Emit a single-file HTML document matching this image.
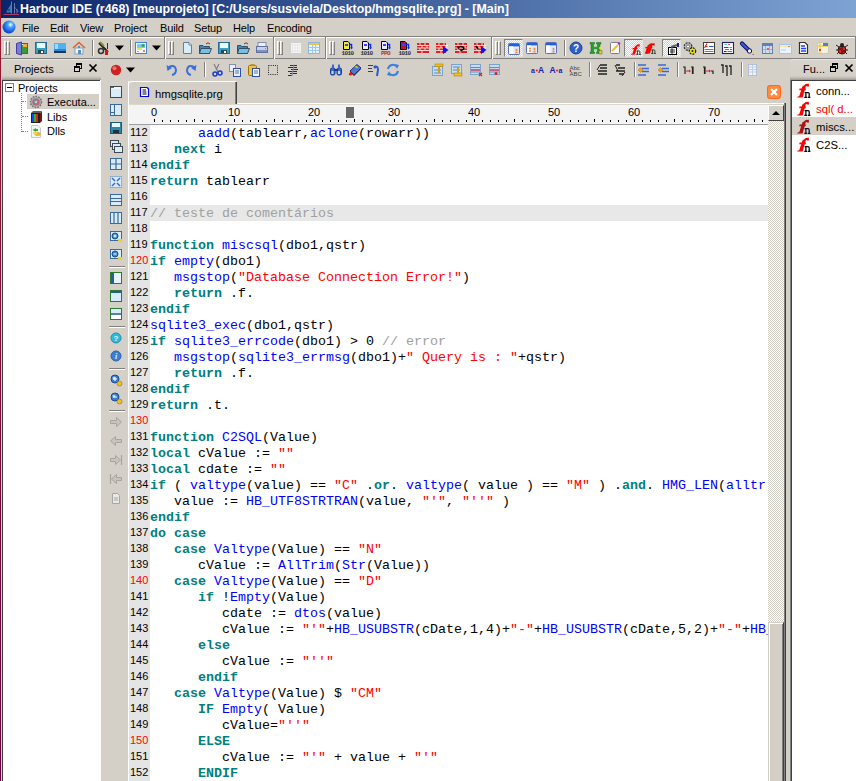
<!DOCTYPE html><html><head><meta charset="utf-8"><style>
html,body{margin:0;padding:0;}
body{width:856px;height:781px;position:relative;overflow:hidden;background:#D4D0C8;font-family:"Liberation Sans",sans-serif;font-size:11px;color:#000;}
div{position:absolute;box-sizing:border-box;}
.code{font-family:"Liberation Mono",monospace;font-size:13.333px;line-height:16px;white-space:pre;color:#000;}
.ln{font-family:"Liberation Sans",sans-serif;font-size:11px;line-height:16px;color:#000;}
.k{color:#008080;font-weight:bold;}
.f{color:#0000FF;}
.s{color:#FF0000;}
.c{color:#A0A0A0;}
.chk{background-color:#D4D0C8;background-image:linear-gradient(45deg,#fff 25%,transparent 25%,transparent 75%,#fff 75%),linear-gradient(45deg,#fff 25%,transparent 25%,transparent 75%,#fff 75%);background-size:2px 2px;background-position:0 0,1px 1px;}
</style></head><body>

<div style="left:0px;top:0px;width:856px;height:18px;background:linear-gradient(to right,#0A246A 0%,#7DA3D3 100%);"></div>
<svg style="position:absolute;left:2px;top:0px" width="18" height="16" viewBox="0 0 18 16"><path d="M1.5 14.5 L17 14.5" stroke="#c04060" stroke-width="0.9"/><path d="M9.5 1.5 L9.5 13.5M12.5 3 L12.5 13.5M15 9 L15 13.5" stroke="#8090b8" stroke-width="0.8"/><path d="M9 4 L4 12.5 L9 12.5Z" fill="#3a78b8"/><path d="M6 10 h2" stroke="#102040" stroke-width="1.2"/><path d="M12.5 7 L16.5 12" stroke="#8090b8" stroke-width="0.6"/></svg>
<div style="left:20px;top:1px;white-space:pre;color:#fff;font-weight:bold;font-size:12.4px;line-height:16px;">Harbour IDE (r468) [meuprojeto] [C:/Users/susviela/Desktop/hmgsqlite.prg] - [Main]</div>
<svg style="position:absolute;left:1px;top:19px" width="16" height="16" viewBox="0 0 16 16"><defs><radialGradient id="gg" cx="0.62" cy="0.32" r="0.75"><stop offset="0" stop-color="#ffffff"/><stop offset="0.3" stop-color="#40a0ff"/><stop offset="1" stop-color="#0030c0"/></radialGradient></defs><circle cx="8" cy="8" r="6.5" fill="url(#gg)"/></svg>
<div style="left:22px;top:21px;white-space:pre;font-size:11px;line-height:14px;letter-spacing:-0.15px;">File</div>
<div style="left:50px;top:21px;white-space:pre;font-size:11px;line-height:14px;letter-spacing:-0.15px;">Edit</div>
<div style="left:80px;top:21px;white-space:pre;font-size:11px;line-height:14px;letter-spacing:-0.15px;">View</div>
<div style="left:114px;top:21px;white-space:pre;font-size:11px;line-height:14px;letter-spacing:-0.15px;">Project</div>
<div style="left:160px;top:21px;white-space:pre;font-size:11px;line-height:14px;letter-spacing:-0.15px;">Build</div>
<div style="left:194px;top:21px;white-space:pre;font-size:11px;line-height:14px;letter-spacing:-0.15px;">Setup</div>
<div style="left:233px;top:21px;white-space:pre;font-size:11px;line-height:14px;letter-spacing:-0.15px;">Help</div>
<div style="left:267px;top:21px;white-space:pre;font-size:11px;line-height:14px;letter-spacing:-0.15px;">Encoding</div>
<div style="left:0px;top:36px;width:856px;height:1px;background:#808080;"></div>
<div style="left:0px;top:37px;width:856px;height:1px;background:#fff;"></div>
<div style="left:0px;top:58px;width:856px;height:1px;background:#808080;"></div>
<div style="left:1px;top:37px;width:164px;height:22px;border-top:1px solid #fff;"></div>
<div style="left:164px;top:37px;width:1px;height:22px;background:#808080;"></div>
<div style="left:165px;top:37px;width:109px;height:22px;border-left:1px solid #fff;border-top:1px solid #fff;"></div>
<div style="left:273px;top:37px;width:1px;height:22px;background:#808080;"></div>
<div style="left:274px;top:37px;width:52px;height:22px;border-left:1px solid #fff;border-top:1px solid #fff;"></div>
<div style="left:325px;top:37px;width:1px;height:22px;background:#808080;"></div>
<div style="left:326px;top:37px;width:166px;height:22px;border-left:1px solid #fff;border-top:1px solid #fff;"></div>
<div style="left:491px;top:37px;width:1px;height:22px;background:#808080;"></div>
<div style="left:492px;top:37px;width:364px;height:22px;border-left:1px solid #fff;border-top:1px solid #fff;"></div>
<div style="left:855px;top:37px;width:1px;height:22px;background:#808080;"></div>
<div style="left:4px;top:41px;width:3px;height:14px;border-left:1px solid #fff;border-top:1px solid #fff;border-right:1px solid #808080;border-bottom:1px solid #808080;"></div>
<div style="left:7px;top:41px;width:3px;height:14px;border-left:1px solid #fff;border-top:1px solid #fff;border-right:1px solid #808080;border-bottom:1px solid #808080;"></div>
<div style="left:168px;top:41px;width:3px;height:14px;border-left:1px solid #fff;border-top:1px solid #fff;border-right:1px solid #808080;border-bottom:1px solid #808080;"></div>
<div style="left:171px;top:41px;width:3px;height:14px;border-left:1px solid #fff;border-top:1px solid #fff;border-right:1px solid #808080;border-bottom:1px solid #808080;"></div>
<div style="left:277px;top:41px;width:3px;height:14px;border-left:1px solid #fff;border-top:1px solid #fff;border-right:1px solid #808080;border-bottom:1px solid #808080;"></div>
<div style="left:280px;top:41px;width:3px;height:14px;border-left:1px solid #fff;border-top:1px solid #fff;border-right:1px solid #808080;border-bottom:1px solid #808080;"></div>
<div style="left:329px;top:41px;width:3px;height:14px;border-left:1px solid #fff;border-top:1px solid #fff;border-right:1px solid #808080;border-bottom:1px solid #808080;"></div>
<div style="left:332px;top:41px;width:3px;height:14px;border-left:1px solid #fff;border-top:1px solid #fff;border-right:1px solid #808080;border-bottom:1px solid #808080;"></div>
<div style="left:495px;top:41px;width:3px;height:14px;border-left:1px solid #fff;border-top:1px solid #fff;border-right:1px solid #808080;border-bottom:1px solid #808080;"></div>
<div style="left:498px;top:41px;width:3px;height:14px;border-left:1px solid #fff;border-top:1px solid #fff;border-right:1px solid #808080;border-bottom:1px solid #808080;"></div>
<div style="left:92px;top:40px;width:1px;height:16px;background:#808080;"></div>
<div style="left:93px;top:40px;width:1px;height:16px;background:#fff;"></div>
<div style="left:130px;top:40px;width:1px;height:16px;background:#808080;"></div>
<div style="left:131px;top:40px;width:1px;height:16px;background:#fff;"></div>
<div style="left:564px;top:40px;width:1px;height:16px;background:#808080;"></div>
<div style="left:565px;top:40px;width:1px;height:16px;background:#fff;"></div>
<div style="left:504px;top:39px;width:19px;height:18px;border-left:1px solid #808080;border-top:1px solid #808080;border-right:1px solid #E4E2DC;border-bottom:1px solid #E4E2DC;"></div>
<div class="chk" style="left:505px;top:40px;width:17px;height:16px;"></div>
<div style="left:624px;top:39px;width:19px;height:18px;border-left:1px solid #808080;border-top:1px solid #808080;border-right:1px solid #E4E2DC;border-bottom:1px solid #E4E2DC;"></div>
<div class="chk" style="left:625px;top:40px;width:17px;height:16px;"></div>
<div style="left:662px;top:39px;width:19px;height:18px;border-left:1px solid #808080;border-top:1px solid #808080;border-right:1px solid #E4E2DC;border-bottom:1px solid #E4E2DC;"></div>
<div class="chk" style="left:663px;top:40px;width:17px;height:16px;"></div>
<svg style="position:absolute;left:14px;top:40px" width="16" height="16" viewBox="0 0 16 16"><rect x="4.5" y="3.5" width="9" height="10" fill="#e8f0ff" stroke="#5050b0"/>
<rect x="7" y="5" width="6" height="8" fill="#3a9a3a"/><rect x="9" y="4" width="4" height="3" fill="#f0b040"/>
<path d="M2.5 3.5 L7.5 2 L7.5 15 L2.5 13.5 Z" fill="#7a7ad8" stroke="#4040a0"/></svg>
<svg style="position:absolute;left:33px;top:40px" width="16" height="16" viewBox="0 0 16 16"><rect x="2.5" y="2.5" width="11" height="11" fill="#3aa0c0" stroke="#2a6a98"/><rect x="4" y="3" width="8" height="5" fill="#e8fcff"/><rect x="5" y="10" width="6" height="3.5" fill="#284858"/><rect x="8" y="11" width="2" height="2" fill="#fff"/></svg>
<svg style="position:absolute;left:52px;top:40px" width="16" height="16" viewBox="0 0 16 16"><rect x="2" y="3" width="12" height="10" fill="#2a8ad8"/><rect x="2" y="3" width="12" height="6" fill="#50b0f0"/>
<rect x="2" y="11" width="12" height="2" fill="#203850"/><rect x="3" y="4" width="3" height="5" fill="#a0d8ff"/></svg>
<svg style="position:absolute;left:71px;top:40px" width="16" height="16" viewBox="0 0 16 16"><path d="M2 8 L8 2.5 L14 8" fill="none" stroke="#e06030" stroke-width="1.6"/>
<rect x="4" y="8" width="8" height="6" fill="#f4f4f4" stroke="#80a0c0"/><rect x="7" y="10" width="3" height="4" fill="#5090d0"/><rect x="7" y="6" width="2" height="2" fill="#5090d0"/></svg>
<svg style="position:absolute;left:96px;top:40px" width="16" height="16" viewBox="0 0 16 16"><path d="M3 3 L12 12" stroke="#202020" stroke-width="2"/><path d="M4 2 L8 6" stroke="#909020" stroke-width="2"/>
<circle cx="5" cy="11" r="2.5" fill="none" stroke="#303030" stroke-width="1.5"/><rect x="9" y="10" width="3" height="5" fill="#e01010"/><rect x="11" y="3" width="1" height="6" fill="#303030"/></svg>
<svg style="position:absolute;left:112px;top:40px" width="16" height="16" viewBox="0 0 16 16"><path d="M3 5.5 L12 5.5 L7.5 10.5 Z" fill="#000"/></svg>
<svg style="position:absolute;left:133px;top:40px" width="16" height="16" viewBox="0 0 16 16"><rect x="2.5" y="2.5" width="11" height="11" fill="#f0f8ff" stroke="#3a8ac8"/>
<rect x="4" y="4" width="8" height="4" fill="#80c8f0"/><rect x="4" y="8" width="5" height="2" fill="#f0e060"/><circle cx="10" cy="5.5" r="1.5" fill="#4a9a3a"/><rect x="10" y="10" width="2" height="2" fill="#f08060"/><rect x="4" y="11" width="2" height="1" fill="#a0c040"/></svg>
<svg style="position:absolute;left:149px;top:40px" width="16" height="16" viewBox="0 0 16 16"><path d="M3 5.5 L12 5.5 L7.5 10.5 Z" fill="#000"/></svg>
<svg style="position:absolute;left:179px;top:40px" width="16" height="16" viewBox="0 0 16 16"><path d="M4.5 2.5 L10 2.5 L12.5 5 L12.5 13.5 L4.5 13.5 Z" fill="#d8ecfa" stroke="#6080a0"/><path d="M10 2.5 L10 5 L12.5 5" fill="#fff" stroke="#6080a0"/></svg>
<svg style="position:absolute;left:197px;top:40px" width="16" height="16" viewBox="0 0 16 16"><path d="M2.5 5.5 L6 5.5 L7 6.5 L12.5 6.5 L12.5 13.5 L2.5 13.5 Z" fill="#3a88b8" stroke="#305070"/>
<path d="M4 8.5 L14.5 8.5 L12.5 13.5 L2.5 13.5 Z" fill="#78c0e0" stroke="#305070"/><path d="M9 4 Q11 1.5 13 4" fill="none" stroke="#803010"/></svg>
<svg style="position:absolute;left:216px;top:40px" width="16" height="16" viewBox="0 0 16 16"><rect x="2.5" y="2.5" width="11" height="11" fill="#3aa0c0" stroke="#2a6a98"/><rect x="4" y="3" width="8" height="5" fill="#e8fcff"/><rect x="5" y="10" width="6" height="3.5" fill="#284858"/><rect x="8" y="11" width="2" height="2" fill="#fff"/></svg>
<svg style="position:absolute;left:235px;top:40px" width="16" height="16" viewBox="0 0 16 16"><path d="M2.5 5.5 L6 5.5 L7 6.5 L12.5 6.5 L12.5 13.5 L2.5 13.5 Z" fill="#3a88b8" stroke="#305070"/>
<path d="M4 8.5 L14.5 8.5 L12.5 13.5 L2.5 13.5 Z" fill="#78c0e0" stroke="#305070"/><path d="M9 4 Q11 1.5 13 4" fill="none" stroke="#803010"/></svg>
<svg style="position:absolute;left:254px;top:40px" width="16" height="16" viewBox="0 0 16 16"><rect x="4" y="2.5" width="8" height="4" fill="#f0f0f0" stroke="#8090b0"/><rect x="2.5" y="6.5" width="11" height="6" fill="#c8d0e8" stroke="#6070a0"/>
<rect x="3" y="10" width="10" height="2" fill="#8090c0"/><rect x="11" y="8" width="1" height="1" fill="#40c040"/></svg>
<svg style="position:absolute;left:288px;top:40px" width="16" height="16" viewBox="0 0 16 16"><rect x="2.5" y="2.5" width="11" height="11" fill="#f4f4f4" stroke="#d0d0d0"/><path d="M4 5h8M4 8h8M4 11h8" stroke="#c8c8c8" stroke-dasharray="1 1.5"/></svg>
<svg style="position:absolute;left:306px;top:40px" width="16" height="16" viewBox="0 0 16 16"><rect x="2.5" y="2.5" width="11" height="11" fill="#e8f4ff" stroke="#8ab8e0"/><rect x="3" y="3" width="10" height="2" fill="#f0c050"/><path d="M3 7.5h10M3 10.5h10M6.5 5v8M9.5 5v8" stroke="#9ac8f0"/></svg>
<svg style="position:absolute;left:339px;top:40px" width="16" height="16" viewBox="0 0 16 16"><path d="M4.5 1.5 L9 1.5 L10.5 3 L10.5 9.5 L4.5 9.5 Z" fill="#f0e840" stroke="#000"/><rect x="6" y="4" width="3" height="2" fill="#4040ff"/>
<path d="M10.5 4.5 L12.5 4.5 L12.5 8" fill="none" stroke="#0030ff" stroke-width="1.5"/><path d="M11 7.5 L14 7.5 L12.5 9.5Z" fill="#0030ff"/>
<text x="8.5" y="15" font-family="Liberation Mono" font-size="6" font-weight="bold" text-anchor="middle" fill="#303030" letter-spacing="-0.6">1010</text></svg>
<svg style="position:absolute;left:358px;top:40px" width="16" height="16" viewBox="0 0 16 16"><path d="M4.5 1.5 L9 1.5 L10.5 3 L10.5 9.5 L4.5 9.5 Z" fill="#e8e8ff" stroke="#000"/><rect x="6" y="4" width="3" height="2" fill="#4040ff"/>
<path d="M10.5 4.5 L12.5 4.5 L12.5 8" fill="none" stroke="#0030ff" stroke-width="1.5"/><path d="M11 7.5 L14 7.5 L12.5 9.5Z" fill="#0030ff"/>
<text x="8.5" y="15" font-family="Liberation Mono" font-size="6" font-weight="bold" text-anchor="middle" fill="#303030" letter-spacing="-0.6">1010</text></svg>
<svg style="position:absolute;left:377px;top:40px" width="16" height="16" viewBox="0 0 16 16"><path d="M4.5 1.5 L9 1.5 L10.5 3 L10.5 9.5 L4.5 9.5 Z" fill="#e8e8ff" stroke="#000"/><rect x="6" y="4" width="3" height="2" fill="#4040ff"/>
<path d="M10.5 4.5 L12.5 4.5 L12.5 8" fill="none" stroke="#0030ff" stroke-width="1.5"/><path d="M11 7.5 L14 7.5 L12.5 9.5Z" fill="#0030ff"/>
<text x="8.5" y="15" font-family="Liberation Mono" font-size="6" font-weight="bold" text-anchor="middle" fill="#b03030" letter-spacing="-0.6">PPO</text></svg>
<svg style="position:absolute;left:396px;top:40px" width="16" height="16" viewBox="0 0 16 16"><path d="M4.5 1.5 L9 1.5 L10.5 3 L10.5 9.5 L4.5 9.5 Z" fill="#c01040" stroke="#000"/><rect x="6" y="4" width="3" height="2" fill="#4040ff"/>
<path d="M10.5 4.5 L12.5 4.5 L12.5 8" fill="none" stroke="#0030ff" stroke-width="1.5"/><path d="M11 7.5 L14 7.5 L12.5 9.5Z" fill="#0030ff"/>
<text x="8.5" y="15" font-family="Liberation Mono" font-size="6" font-weight="bold" text-anchor="middle" fill="#303030" letter-spacing="-0.6">1010</text></svg>
<svg style="position:absolute;left:415px;top:40px" width="16" height="16" viewBox="0 0 16 16"><rect x="2" y="3" width="12" height="10" fill="#e02020"/><path d="M2 5.5h12M2 8h12M2 10.5h12" stroke="#fff" stroke-width="0.8"/><path d="M5 3v2.5M10 3v2.5M7 5.5v2.5M12 5.5v2.5M5 8v2.5M10 8v2.5M7 10.5v2.5" stroke="#fff" stroke-width="0.8"/></svg>
<svg style="position:absolute;left:434px;top:40px" width="16" height="16" viewBox="0 0 16 16"><rect x="2" y="3" width="10" height="10" fill="#e02020"/><path d="M2 5.5h12M2 8h12M2 10.5h12" stroke="#fff" stroke-width="0.8"/><path d="M5 3v2.5M10 3v2.5M7 5.5v2.5M12 5.5v2.5M5 8v2.5M10 8v2.5M7 10.5v2.5" stroke="#fff" stroke-width="0.8"/><path d="M9 6 L14.5 10 L9 14 Z" fill="#1010ff"/></svg>
<svg style="position:absolute;left:453px;top:40px" width="16" height="16" viewBox="0 0 16 16"><rect x="2" y="3" width="12" height="10" fill="#e02020"/><path d="M2 5.5h12M2 8h12M2 10.5h12" stroke="#fff" stroke-width="0.8"/><path d="M5 3v2.5M10 3v2.5M7 5.5v2.5M12 5.5v2.5M5 8v2.5M10 8v2.5M7 10.5v2.5" stroke="#fff" stroke-width="0.8"/><path d="M5 8 Q8 5 11 8 Q10 11 7 10" fill="none" stroke="#000" stroke-width="1.3"/><path d="M4 6 L5 9 L7 8Z" fill="#000"/></svg>
<svg style="position:absolute;left:472px;top:40px" width="16" height="16" viewBox="0 0 16 16"><rect x="2" y="3" width="10" height="10" fill="#e02020"/><path d="M2 5.5h12M2 8h12M2 10.5h12" stroke="#fff" stroke-width="0.8"/><path d="M5 3v2.5M10 3v2.5M7 5.5v2.5M12 5.5v2.5M5 8v2.5M10 8v2.5M7 10.5v2.5" stroke="#fff" stroke-width="0.8"/><path d="M4 6 L6 9" stroke="#000" stroke-width="1.5"/><path d="M9 6 L14.5 10 L9 14 Z" fill="#1010ff"/></svg>
<svg style="position:absolute;left:506px;top:41px" width="16" height="16" viewBox="0 0 16 16"><rect x="2.5" y="2.5" width="11" height="11" rx="0.8" fill="#ecedfc" stroke="#5a70c0"/><rect x="3" y="3" width="10" height="2.4" fill="#1a60e8"/><rect x="3" y="5.4" width="4" height="7.6" fill="#fafcff"/>
<rect x="8.5" y="7" width="4" height="6" fill="#d8e0f4"/><circle cx="10.5" cy="9" r="1.1" fill="#f09030"/><circle cx="10.5" cy="11.5" r="1.1" fill="#f09030"/></svg>
<svg style="position:absolute;left:524px;top:40px" width="16" height="16" viewBox="0 0 16 16"><rect x="2.5" y="2.5" width="11" height="11" rx="0.8" fill="#ecedfc" stroke="#5a70c0"/><rect x="3" y="3" width="10" height="2.4" fill="#1a60e8"/><rect x="3" y="5.4" width="4" height="7.6" fill="#fafcff"/>
<rect x="8.5" y="7" width="4" height="6" fill="#d8e0f4"/><circle cx="10.5" cy="9" r="1.1" fill="#f09030"/><circle cx="10.5" cy="11.5" r="1.1" fill="#f09030"/><circle cx="6" cy="8.5" r="1.1" fill="#f09030"/><circle cx="6" cy="11" r="1.1" fill="#f09030"/></svg>
<svg style="position:absolute;left:543px;top:40px" width="16" height="16" viewBox="0 0 16 16"><rect x="2.5" y="2.5" width="11" height="11" rx="0.8" fill="#ecedfc" stroke="#5a70c0"/><rect x="3" y="3" width="10" height="2.4" fill="#1a60e8"/><rect x="3" y="5.4" width="4" height="7.6" fill="#fafcff"/>
<rect x="8.5" y="7" width="4" height="6" fill="#d8e0f4"/><circle cx="10.5" cy="9" r="1.1" fill="#f09030"/><circle cx="10.5" cy="11.5" r="1.1" fill="#f09030"/></svg>
<svg style="position:absolute;left:568px;top:40px" width="16" height="16" viewBox="0 0 16 16"><circle cx="8" cy="8" r="6" fill="#2a60c8" stroke="#1a40a0"/><text x="8" y="12" font-family="Liberation Sans" font-weight="bold" font-size="10" text-anchor="middle" fill="#fff">?</text></svg>
<svg style="position:absolute;left:588px;top:40px" width="16" height="16" viewBox="0 0 16 16"><path d="M2 2.5h4.5v1.5h-1v3.2h4v-3.2h-1v-1.5h4.5v1.5h-1v8h1v1.5h-4.5v-1.5h1v-3.2h-4v3.2h1v1.5h-4.5v-1.5h1v-8h-1Z" fill="#20a030" stroke="#107020" stroke-width="0.5"/><circle cx="12.5" cy="8" r="1.5" fill="#f0e020"/><path d="M11 10.5h3v3.5h-3Z" fill="#e8d010" stroke="#606010" stroke-width="0.5"/></svg>
<svg style="position:absolute;left:607px;top:40px" width="16" height="16" viewBox="0 0 16 16"><rect x="3.5" y="2.5" width="9" height="11" rx="1" fill="#f8f8f8" stroke="#808080"/><path d="M5 11 L11 5" stroke="#f0c020" stroke-width="2"/><circle cx="12" cy="3.5" r="1.3" fill="#c020c0"/></svg>
<svg style="position:absolute;left:630px;top:43px" width="12" height="12" viewBox="0 0 16 16"><path d="M8.2 3.2 Q9.5 1.6 12.8 1.8 L13 4.6 L11 4.6 Q10.6 3.6 9.8 4.2 L6.6 15.4 L1.2 15.6 L1.6 14.4 L3.2 14.2 L6.4 4.6 Z" fill="#ff0000"/><path d="M3.6 6.6 L10 6.6 L9.6 8.2 L3.2 8.2 Z" fill="#ff0000"/><path d="M8.6 10.6 h3.4 q1.2 0 1.2 1.2 v3.6 M9.9 10.6 v4.8 M8.3 15.4 h3 M12 15.4 h2.4" stroke="#303030" stroke-width="1.25" fill="none"/></svg>
<svg style="position:absolute;left:645px;top:42px" width="12" height="12" viewBox="0 0 16 16"><g transform="translate(-3,0)"><path d="M8.2 3.2 Q9.5 1.6 12.8 1.8 L13 4.6 L11 4.6 Q10.6 3.6 9.8 4.2 L6.6 15.4 L1.2 15.6 L1.6 14.4 L3.2 14.2 L6.4 4.6 Z" fill="#ff0000"/><path d="M3.6 6.6 L10 6.6 L9.6 8.2 L3.2 8.2 Z" fill="#ff0000"/></g><path d="M8.2 3.2 Q9.5 1.6 12.8 1.8 L13 4.6 L11 4.6 Q10.6 3.6 9.8 4.2 L6.6 15.4 L1.2 15.6 L1.6 14.4 L3.2 14.2 L6.4 4.6 Z" fill="#ff0000"/><path d="M3.6 6.6 L10 6.6 L9.6 8.2 L3.2 8.2 Z" fill="#ff0000"/><path d="M8.6 10.6 h3.4 q1.2 0 1.2 1.2 v3.6 M9.9 10.6 v4.8 M8.3 15.4 h3 M12 15.4 h2.4" stroke="#303030" stroke-width="1.25" fill="none"/></svg>
<svg style="position:absolute;left:665px;top:41px" width="16" height="16" viewBox="0 0 16 16"><rect x="3.5" y="6.5" width="8" height="7" fill="#f8f8f8" stroke="#000"/><path d="M5 9h5M5 11h5M7 7v6" stroke="#000" stroke-width="0.8"/><path d="M6 6 L12 4" stroke="#606060" stroke-width="2"/><rect x="12" y="2" width="2" height="4" fill="#2020a0"/></svg>
<svg style="position:absolute;left:682px;top:40px" width="16" height="16" viewBox="0 0 16 16"><circle cx="6" cy="6.5" r="3.8" fill="#b8b8b8" stroke="#303030" stroke-width="1.2" stroke-dasharray="2 1"/><circle cx="6" cy="6.5" r="1.5" fill="#fff" stroke="#404040" stroke-width="0.6"/><circle cx="10.5" cy="11" r="3.2" fill="#e8e020" stroke="#202010" stroke-width="1.2" stroke-dasharray="2 1"/><circle cx="10.5" cy="11" r="1" fill="#202010"/></svg>
<svg style="position:absolute;left:701px;top:40px" width="16" height="16" viewBox="0 0 16 16"><rect x="2.5" y="2.5" width="11" height="11" fill="#fff" stroke="#404040"/><path d="M3.5 8 L6 3.5 M4.5 6.5h2" stroke="#e02020" stroke-width="1.1" fill="none"/><path d="M8 6.5h4.5" stroke="#3050c0" stroke-width="1"/><path d="M3.5 9.5h9M3.5 11.5h9" stroke="#6a78c8" stroke-width="1"/></svg>
<svg style="position:absolute;left:720px;top:40px" width="16" height="16" viewBox="0 0 16 16"><rect x="2.5" y="2.5" width="11" height="11" fill="#fff" stroke="#20206a" stroke-width="1.1"/><path d="M4.5 4.5h2.5" stroke="#30d0d0" stroke-width="1"/><path d="M8 4.5h2" stroke="#f04080" stroke-width="1"/><path d="M4 7.5h4.5" stroke="#2040e0" stroke-width="1"/><path d="M9.5 7.5h2.5" stroke="#30c030" stroke-width="1"/><path d="M5 9.5h4" stroke="#20b020" stroke-width="1"/><path d="M10 9.5h2" stroke="#806040" stroke-width="1"/><path d="M4 11.5h2.5" stroke="#20206a" stroke-width="1"/><path d="M7.5 11.5h4.5" stroke="#e04040" stroke-width="1"/></svg>
<svg style="position:absolute;left:739px;top:40px" width="16" height="16" viewBox="0 0 16 16"><path d="M3 3.5 L10 10.5" stroke="#101060" stroke-width="4.2" stroke-linecap="round"/><path d="M3 3.5 L9.5 10" stroke="#3a5ae0" stroke-width="2.2" stroke-linecap="round"/><circle cx="10.5" cy="11" r="2.2" fill="#f0f0f0" stroke="#101060"/><path d="M12 14 L14 12.5" stroke="#e0e040" stroke-width="1"/><path d="M13.5 14.5h1.5" stroke="#a050d0" stroke-width="1.2"/></svg>
<svg style="position:absolute;left:759px;top:40px" width="16" height="16" viewBox="0 0 16 16"><rect x="3.5" y="3.5" width="10" height="10" fill="#d0dcf0" stroke="#6080b0"/><rect x="4" y="4" width="9" height="2" fill="#6080c0"/><path d="M6.5 6v7M10.5 6v7M4 9.5h9" stroke="#a0b0d0"/><rect x="8" y="8" width="2" height="2" fill="#e06060"/></svg>
<svg style="position:absolute;left:777px;top:40px" width="16" height="16" viewBox="0 0 16 16"><rect x="2.5" y="4.5" width="12" height="9" fill="#e8f4ff" stroke="#a0c8e8"/><rect x="3" y="5" width="11" height="2" fill="#f8e8c0"/><path d="M4 10h5" stroke="#b0d0f0"/><rect x="11" y="6" width="2" height="1" fill="#e08060"/></svg>
<svg style="position:absolute;left:795px;top:40px" width="16" height="16" viewBox="0 0 16 16"><path d="M4.5 2.5 L10 2.5 L12.5 5 L12.5 13.5 L4.5 13.5 Z" fill="#fff" stroke="#303030" stroke-width="1.2"/><path d="M6 6h4M6 8.5h5M6 11h5" stroke="#2040ff" stroke-width="1.3"/></svg>
<svg style="position:absolute;left:815px;top:40px" width="16" height="16" viewBox="0 0 16 16"><rect x="2.5" y="2.5" width="11" height="11" rx="1.5" fill="#f4f0e0" stroke="#d0c8b0"/><path d="M5 3v10" stroke="#f0d040" stroke-width="1.5"/><path d="M3 6h10" stroke="#f0d040" stroke-width="1.5"/><rect x="8" y="3" width="5" height="3" fill="#5080c0"/><rect x="4" y="9" width="2" height="2" fill="#e04040"/></svg>
<svg style="position:absolute;left:834px;top:40px" width="16" height="16" viewBox="0 0 16 16"><path d="M2 5 L5 7M14 5 L11 7M2 10h3M14 10h-3M3 14 L5 12M13 14 L11 12" stroke="#202020" stroke-width="1"/><ellipse cx="8" cy="10" rx="4" ry="4" fill="#e02020" stroke="#301010"/><circle cx="8" cy="5" r="2" fill="#202020"/><path d="M8 6v8" stroke="#301010"/><circle cx="6" cy="9" r="0.8" fill="#000"/><circle cx="10" cy="11" r="0.8" fill="#000"/></svg>
<div style="left:0px;top:0px;width:1px;height:781px;background:linear-gradient(#9B1B30,#6A0045);"></div>
<div style="left:204px;top:62px;width:1px;height:15px;background:#808080;"></div>
<div style="left:205px;top:62px;width:1px;height:15px;background:#fff;"></div>
<div style="left:589px;top:62px;width:1px;height:15px;background:#808080;"></div>
<div style="left:590px;top:62px;width:1px;height:15px;background:#fff;"></div>
<div style="left:634px;top:62px;width:1px;height:15px;background:#808080;"></div>
<div style="left:635px;top:62px;width:1px;height:15px;background:#fff;"></div>
<div style="left:677px;top:62px;width:1px;height:15px;background:#808080;"></div>
<div style="left:678px;top:62px;width:1px;height:15px;background:#fff;"></div>
<div style="left:741px;top:62px;width:1px;height:15px;background:#808080;"></div>
<div style="left:742px;top:62px;width:1px;height:15px;background:#fff;"></div>
<svg style="position:absolute;left:108px;top:62px" width="16" height="16" viewBox="0 0 16 16"><circle cx="8" cy="8" r="5.2" fill="#d02020"/><circle cx="6.5" cy="6.3" r="2" fill="#f07070"/></svg>
<svg style="position:absolute;left:123px;top:62px" width="16" height="16" viewBox="0 0 16 16"><path d="M3 5.5 L12 5.5 L7.5 10.5 Z" fill="#000"/></svg>
<svg style="position:absolute;left:164px;top:62px" width="16" height="16" viewBox="0 0 16 16"><path d="M5 5 Q11 2 12 8 Q12 12 8 13" fill="none" stroke="#3a70d8" stroke-width="2"/><path d="M2.5 3 L3.5 9 L8 6 Z" fill="#3a70d8"/></svg>
<svg style="position:absolute;left:183px;top:62px" width="16" height="16" viewBox="0 0 16 16"><path d="M11 5 Q5 2 4 8 Q4 12 8 13" fill="none" stroke="#3a70d8" stroke-width="2"/><path d="M13.5 3 L12.5 9 L8 6 Z" fill="#3a70d8"/></svg>
<svg style="position:absolute;left:209px;top:62px" width="16" height="16" viewBox="0 0 16 16"><path d="M5 2 L9 10M10 2 L7 8" stroke="#808080" stroke-width="1.2"/><circle cx="6" cy="12" r="2" fill="none" stroke="#1a3ad0" stroke-width="1.5"/><circle cx="11" cy="11" r="2" fill="none" stroke="#1a3ad0" stroke-width="1.5"/></svg>
<svg style="position:absolute;left:227px;top:62px" width="16" height="16" viewBox="0 0 16 16"><rect x="2.5" y="2.5" width="6" height="7" fill="#e8f0ff" stroke="#8090b0"/><rect x="6.5" y="6.5" width="7" height="8" fill="#e8f0ff" stroke="#3050a0"/><path d="M8 9h4M8 11h4" stroke="#3050a0" stroke-width="0.8"/></svg>
<svg style="position:absolute;left:246px;top:62px" width="16" height="16" viewBox="0 0 16 16"><rect x="2.5" y="3.5" width="8" height="10" rx="1" fill="#f0c040" stroke="#a07010"/><rect x="4.5" y="2" width="4" height="2" fill="#c09030"/><rect x="6.5" y="6.5" width="7" height="8" fill="#f0f4ff" stroke="#3050a0"/><path d="M8 9h4M8 11h4" stroke="#3050a0" stroke-width="0.8"/></svg>
<svg style="position:absolute;left:265px;top:62px" width="16" height="16" viewBox="0 0 16 16"><rect x="3.5" y="3.5" width="9" height="9" fill="none" stroke="#202020" stroke-dasharray="1 1.2"/></svg>
<svg style="position:absolute;left:285px;top:62px" width="16" height="16" viewBox="0 0 16 16"><path d="M5 3.5h7M3 5.5h9M6 7.5h7M3 9.5h9M5 11.5h7M3 13.5h4" stroke="#303030" stroke-width="1"/><path d="M9 2.5 L7 14" stroke="#8090c0" stroke-width="1"/></svg>
<svg style="position:absolute;left:328px;top:62px" width="16" height="16" viewBox="0 0 16 16"><rect x="2.5" y="6" width="4.5" height="7" rx="1.5" fill="#3a6ad0" stroke="#1a3a90"/><rect x="9" y="6" width="4.5" height="7" rx="1.5" fill="#3a6ad0" stroke="#1a3a90"/><rect x="4" y="2.5" width="2" height="4" fill="#3a6ad0"/><rect x="10" y="2.5" width="2" height="4" fill="#3a6ad0"/><rect x="6" y="7" width="4" height="2" fill="#1a3a90"/><rect x="3.5" y="9" width="2" height="3" fill="#c0d8ff"/><rect x="10" y="9" width="2" height="3" fill="#c0d8ff"/></svg>
<svg style="position:absolute;left:347px;top:62px" width="16" height="16" viewBox="0 0 16 16"><path d="M3 9 L10 2.5 L14 6 L7 13 Z" fill="#4a7ad0" stroke="#203070"/><path d="M7 5 L10 4 L11 6 Z" fill="#f0e020"/><path d="M3 10 L7 14 L14 7" fill="none" stroke="#e04040"/><circle cx="3.5" cy="12" r="1.6" fill="#e01010"/></svg>
<svg style="position:absolute;left:366px;top:62px" width="16" height="16" viewBox="0 0 16 16"><path d="M2 3.5h5M2 6.5h4M2 9.5h5" stroke="#404040" stroke-width="1"/><path d="M8 5 Q12 3 12 8 L11 14" fill="none" stroke="#2a5ad0" stroke-width="2"/><circle cx="9" cy="5" r="1.5" fill="#2a5ad0"/></svg>
<svg style="position:absolute;left:385px;top:62px" width="16" height="16" viewBox="0 0 16 16"><path d="M3 7 A5 5 0 0 1 12 5" fill="none" stroke="#3a80e0" stroke-width="2"/><path d="M13 9 A5 5 0 0 1 4 11" fill="none" stroke="#3a80e0" stroke-width="2"/><path d="M10 2 L14 3 L12 7Z" fill="#3a80e0"/><path d="M6 14 L2 13 L4 9Z" fill="#3a80e0"/></svg>
<svg style="position:absolute;left:430px;top:62px" width="16" height="16" viewBox="0 0 16 16"><rect x="2.5" y="4.5" width="10" height="9" fill="#c8dcf0" stroke="#80a0c8"/><path d="M4 8h7M4 11h7" stroke="#5a8ad0"/><rect x="5" y="2" width="8" height="2.5" fill="#f0c020" stroke="#b08010" stroke-width="0.6"/><rect x="8" y="4" width="2" height="7" fill="#d0a010"/></svg>
<svg style="position:absolute;left:449px;top:62px" width="16" height="16" viewBox="0 0 16 16"><rect x="2.5" y="2.5" width="10" height="9" fill="#c8dcf0" stroke="#80a0c8"/><path d="M4 5h7M4 8h7" stroke="#5a8ad0"/><rect x="5" y="11" width="8" height="3" fill="#f0c020" stroke="#b08010" stroke-width="0.6"/><rect x="8" y="5" width="2" height="6" fill="#d0a010"/></svg>
<svg style="position:absolute;left:468px;top:62px" width="16" height="16" viewBox="0 0 16 16"><rect x="2.5" y="2.5" width="10" height="10" fill="#c8dcf0" stroke="#80a0c8"/><path d="M3 5.5h9M3 10h9" stroke="#5a8ad0" stroke-width="1.2"/><path d="M3 8h9" stroke="#c04060" stroke-width="1.5"/><path d="M11 11 L14 14M14 11 L11 14" stroke="#e02020" stroke-width="1.2"/></svg>
<svg style="position:absolute;left:487px;top:62px" width="16" height="16" viewBox="0 0 16 16"><rect x="2.5" y="2.5" width="10" height="10" fill="#c8dcf0" stroke="#80a0c8"/><path d="M3 5.5h9M3 10h9" stroke="#5a8ad0" stroke-width="1.2"/><path d="M3 8h9" stroke="#c04060" stroke-width="1.5"/><circle cx="9" cy="11.5" r="1.5" fill="#e02020"/></svg>
<svg style="position:absolute;left:530px;top:62px" width="16" height="16" viewBox="0 0 16 16"><text x="1" y="11" font-family="Liberation Sans" font-weight="bold" font-size="7" fill="#1a1ab0">a</text><text x="8" y="11" font-family="Liberation Sans" font-weight="bold" font-size="8.5" fill="#1a1ab0">A</text><circle cx="6.8" cy="8.5" r="1" fill="#e02020"/></svg>
<svg style="position:absolute;left:549px;top:62px" width="16" height="16" viewBox="0 0 16 16"><text x="0.5" y="11" font-family="Liberation Sans" font-weight="bold" font-size="8.5" fill="#1a1ab0">A</text><text x="9.5" y="11" font-family="Liberation Sans" font-weight="bold" font-size="7" fill="#1a1ab0">a</text><circle cx="8" cy="8.5" r="1" fill="#e02020"/></svg>
<svg style="position:absolute;left:568px;top:62px" width="16" height="16" viewBox="0 0 16 16"><text x="1.5" y="7.5" font-family="Liberation Sans" font-size="6" fill="#404040">Abc</text><text x="1.5" y="14" font-family="Liberation Sans" font-size="6" fill="#404040">ABC</text><circle cx="2.5" cy="9" r="0.9" fill="#e02020"/></svg>
<svg style="position:absolute;left:594px;top:62px" width="16" height="16" viewBox="0 0 16 16"><path d="M6 3h7M6 6h7M4 9h9M4 12h9" stroke="#202020" stroke-width="1.3"/><path d="M3 8 L6 3" stroke="#202020" stroke-width="1"/></svg>
<svg style="position:absolute;left:612px;top:62px" width="16" height="16" viewBox="0 0 16 16"><path d="M4 3h4M6 6h7M4 9h9M7 12h5" stroke="#202020" stroke-width="1.3"/><path d="M3 3 L6 9M10 14 L13 10" stroke="#202020" stroke-width="1"/></svg>
<svg style="position:absolute;left:636px;top:62px" width="16" height="16" viewBox="0 0 16 16"><path d="M2 3h8M2 13h8M6 6.5h7M6 9.5h7" stroke="#3a6ad0" stroke-width="1.6"/><path d="M2 8 L4.5 5.5 L7 8 L4.5 10.5Z" fill="#f0a020" stroke="#c07010" stroke-width="0.5"/></svg>
<svg style="position:absolute;left:656px;top:62px" width="16" height="16" viewBox="0 0 16 16"><path d="M2 3h8M2 13h8M6 6.5h7M6 9.5h7" stroke="#3a6ad0" stroke-width="1.6"/><path d="M2 8 L4.5 5.5 L7 8 L4.5 10.5Z" fill="#f0a020" stroke="#c07010" stroke-width="0.5"/></svg>
<svg style="position:absolute;left:681px;top:62px" width="16" height="16" viewBox="0 0 16 16"><path d="M2 5h2v7" fill="none" stroke="#202020" stroke-width="1.2"/><path d="M10 5h2v7M11.5 5v7" fill="none" stroke="#202020" stroke-width="1.2"/><path d="M5 9h4" stroke="#e02020"/><path d="M8 7.5 L10 9 L8 10.5Z" fill="#e02020"/></svg>
<svg style="position:absolute;left:701px;top:62px" width="16" height="16" viewBox="0 0 16 16"><path d="M2 5h2v7M3.5 5v7" fill="none" stroke="#202020" stroke-width="1.2"/><path d="M10 9h2v3" fill="none" stroke="#202020" stroke-width="1.2"/><path d="M5 9h4" stroke="#e02020"/><path d="M8 7.5 L10 9 L8 10.5Z" fill="#e02020"/></svg>
<svg style="position:absolute;left:719px;top:62px" width="16" height="16" viewBox="0 0 16 16"><path d="M2 3h2v8M6 4h2v10M10 4h2v9M12 4v6" fill="none" stroke="#202020" stroke-width="1.3"/></svg>
<svg style="position:absolute;left:745px;top:62px" width="16" height="16" viewBox="0 0 16 16"><rect x="3.5" y="2.5" width="8" height="11" fill="#f0f4f8" stroke="#b0c0d8"/><path d="M4 5h7M4 7.5h7M4 10h7M7.5 3v10" stroke="#c0d0e0"/></svg>
<div style="left:1px;top:59px;width:100px;height:722px;background:#D4D0C8;"></div>
<div style="left:100px;top:80px;width:1px;height:701px;background:#fff;"></div>
<div style="left:2px;top:59px;width:99px;height:21px;border-top-left-radius:4px;border-top-right-radius:4px;background:linear-gradient(#D8D4CC 0%,#D4D0C8 80%,#B8B4AC 92%,#9A968E 100%);border-top:1px solid #E8E6E0;"></div>
<div style="left:14px;top:62px;white-space:pre;font-size:11px;line-height:14px;">Projects</div>
<svg style="position:absolute;left:72px;top:63px" width="28" height="14" viewBox="0 0 28 14"><rect x="4.5" y="0.5" width="5" height="5" fill="#D4D0C8" stroke="#000"/><rect x="4" y="0" width="6" height="2" fill="#000"/><rect x="2.5" y="3.5" width="5" height="5" fill="#D8D4CC" stroke="#000"/><rect x="2" y="3" width="6" height="2" fill="#000"/><path d="M17.5 1.5 L24.5 8.5 M24.5 1.5 L17.5 8.5" stroke="#000" stroke-width="1.7"/></svg>
<div style="left:2px;top:80px;width:98px;height:701px;background:#fff;border-top:1px solid #404040;border-left:1px solid #404040;"></div>
<div style="left:5px;top:83px;width:9px;height:9px;border:1px solid #808080;background:#fff;"></div>
<div style="left:7px;top:87px;width:5px;height:1px;background:#000;"></div>
<div style="left:18px;top:81px;white-space:pre;font-size:11px;line-height:14px;">Projects</div>
<div style="left:21px;top:93px;width:1px;height:39px;border-left:1px dotted #808080;"></div>
<div style="left:22px;top:101px;width:6px;height:1px;border-top:1px dotted #808080;"></div>
<div style="left:22px;top:116px;width:6px;height:1px;border-top:1px dotted #808080;"></div>
<div style="left:22px;top:131px;width:6px;height:1px;border-top:1px dotted #808080;"></div>
<div style="left:27px;top:94px;width:72px;height:15px;background:#D4D0C8;"></div>
<svg style="position:absolute;left:28px;top:94px" width="16" height="16" viewBox="0 0 16 16"><circle cx="8" cy="8" r="5.6" fill="#a8a8b0" stroke="#707078" stroke-width="1.4" stroke-dasharray="1.6 1.2"/><circle cx="8" cy="8" r="3.6" fill="#c86060"/><circle cx="8" cy="8" r="2.2" fill="#6a9ab8"/><circle cx="8" cy="8" r="0.9" fill="#e0e0e0"/></svg>
<div style="left:47px;top:95px;white-space:pre;font-size:11px;line-height:14px;">Executa...</div>
<svg style="position:absolute;left:28px;top:109px" width="16" height="16" viewBox="0 0 16 16"><rect x="3" y="4" width="9" height="10" fill="#202020"/><rect x="4" y="5" width="2" height="8" fill="#2040ff"/><rect x="6" y="5" width="2" height="8" fill="#20c020"/><rect x="8" y="5" width="2" height="8" fill="#e02020"/><path d="M12 4 L14 2 L14 12 L12 14Z" fill="#801010"/><path d="M3 4 L5 2 L14 2 L12 4Z" fill="#606060"/></svg>
<div style="left:47px;top:110px;white-space:pre;font-size:11px;line-height:14px;">Libs</div>
<svg style="position:absolute;left:28px;top:123px" width="16" height="16" viewBox="0 0 16 16"><path d="M3.5 2.5 L10 2.5 L12.5 5 L12.5 14.5 L3.5 14.5 Z" fill="#f4f4f4" stroke="#c8c8c8"/><path d="M4.5 7 L8 5 L8 6 L10 6 L10 8 L8 8 L8 9Z" fill="#30b040"/><ellipse cx="9.5" cy="11" rx="2.8" ry="1.6" fill="#f0c020" stroke="#c09010" stroke-width="0.5"/><ellipse cx="7" cy="10" rx="2.2" ry="1.3" fill="#f8d840"/></svg>
<div style="left:47px;top:124px;white-space:pre;font-size:11px;line-height:14px;">Dlls</div>
<svg style="position:absolute;left:108px;top:84px" width="16" height="16" viewBox="0 0 16 16"><rect x="2.5" y="2.5" width="11" height="11" fill="#d8ecfc" stroke="#404850"/><rect x="3" y="3" width="10" height="2" fill="#f4f4f4"/><rect x="3" y="3" width="3" height="1" fill="#e03030"/></svg>
<svg style="position:absolute;left:108px;top:102px" width="16" height="16" viewBox="0 0 16 16"><rect x="2.5" y="2.5" width="11" height="11" fill="#d8ecfc" stroke="#3a6aa0"/><path d="M6.5 3v10M3 10.5h3.5" stroke="#3a6aa0"/></svg>
<svg style="position:absolute;left:108px;top:120px" width="16" height="16" viewBox="0 0 16 16"><rect x="2.5" y="2.5" width="11" height="11" fill="#2a8aa8" stroke="#1a5a80"/><rect x="4" y="3" width="8" height="4" fill="#e8f8ff"/><rect x="5" y="10" width="6" height="3" fill="#203040"/></svg>
<svg style="position:absolute;left:108px;top:138px" width="16" height="16" viewBox="0 0 16 16"><rect x="2.5" y="2.5" width="8" height="6" fill="#d8ecfc" stroke="#404850"/><rect x="4.5" y="5.5" width="8" height="6" fill="#d8ecfc" stroke="#404850"/><rect x="6.5" y="8.5" width="8" height="6" fill="#d8ecfc" stroke="#404850"/></svg>
<svg style="position:absolute;left:108px;top:156px" width="16" height="16" viewBox="0 0 16 16"><rect x="2.5" y="2.5" width="11" height="11" fill="#d8ecfc" stroke="#3a6aa0"/><path d="M8 3v10M3 8h10" stroke="#3a6aa0" stroke-width="1.2"/></svg>
<svg style="position:absolute;left:108px;top:174px" width="16" height="16" viewBox="0 0 16 16"><rect x="2.5" y="2.5" width="11" height="11" fill="#d8ecfc" stroke="#90b0d0"/><path d="M4 4 L7 7M12 4 L9 7M4 12 L7 9M12 12 L9 9" stroke="#3a6ad0" stroke-width="1.5"/></svg>
<svg style="position:absolute;left:108px;top:192px" width="16" height="16" viewBox="0 0 16 16"><rect x="2.5" y="2.5" width="11" height="11" fill="#d8ecfc" stroke="#3a6aa0"/><path d="M3 6.5h10M3 9.5h10" stroke="#3a6aa0" stroke-width="1.2"/></svg>
<svg style="position:absolute;left:108px;top:210px" width="16" height="16" viewBox="0 0 16 16"><rect x="2.5" y="2.5" width="11" height="11" fill="#d8ecfc" stroke="#3a6aa0"/><path d="M6 3v10M10 3v10" stroke="#3a6aa0" stroke-width="1.2"/></svg>
<svg style="position:absolute;left:108px;top:228px" width="16" height="16" viewBox="0 0 16 16"><rect x="2.5" y="3.5" width="11" height="9" fill="#d8ecfc" stroke="#3a6aa0"/><circle cx="7" cy="8" r="3" fill="#3a8ad0" stroke="#1a4a90"/><path d="M5.5 8h3M7 6.5v3" stroke="#fff"/><rect x="10" y="11" width="4" height="3" fill="#f0d020"/></svg>
<svg style="position:absolute;left:108px;top:246px" width="16" height="16" viewBox="0 0 16 16"><rect x="2.5" y="3.5" width="11" height="9" fill="#d8ecfc" stroke="#3a6aa0"/><circle cx="7" cy="8" r="3" fill="#3a8ad0" stroke="#1a4a90"/><path d="M5.5 8h3" stroke="#fff"/><rect x="10" y="11" width="4" height="3" fill="#f0d020"/></svg>
<svg style="position:absolute;left:108px;top:270px" width="16" height="16" viewBox="0 0 16 16"><rect x="2.5" y="2.5" width="11" height="11" fill="#e8f4fc" stroke="#2a7a30"/><rect x="3" y="3" width="3" height="10" fill="#2a5aa0"/></svg>
<svg style="position:absolute;left:108px;top:288px" width="16" height="16" viewBox="0 0 16 16"><rect x="2.5" y="2.5" width="11" height="11" fill="#d8ecfc" stroke="#2a7a30"/><rect x="3" y="3" width="10" height="2" fill="#2a5aa0"/></svg>
<svg style="position:absolute;left:108px;top:306px" width="16" height="16" viewBox="0 0 16 16"><rect x="2.5" y="2.5" width="11" height="11" fill="#d8ecfc" stroke="#2a7a30"/><path d="M3 8h10" stroke="#2a5aa0" stroke-width="1.5"/><rect x="3" y="9" width="10" height="4" fill="#ffffff"/></svg>
<svg style="position:absolute;left:108px;top:330px" width="16" height="16" viewBox="0 0 16 16"><circle cx="8" cy="8" r="5" fill="#30b8d8" stroke="#2090b0"/><text x="8" y="11" font-family="Liberation Sans" font-weight="bold" font-size="8" text-anchor="middle" fill="#e0f8ff">?</text></svg>
<svg style="position:absolute;left:108px;top:348px" width="16" height="16" viewBox="0 0 16 16"><circle cx="8" cy="8" r="5" fill="#3a80d0" stroke="#2a60b0"/><text x="8" y="11" font-family="Liberation Serif" font-style="italic" font-weight="bold" font-size="8" text-anchor="middle" fill="#e0f0ff">i</text></svg>
<svg style="position:absolute;left:108px;top:372px" width="16" height="16" viewBox="0 0 16 16"><circle cx="7" cy="7" r="4" fill="#3a80d0" stroke="#1a4a90"/><circle cx="6" cy="6" r="1.5" fill="#a0d0ff"/><path d="M5 7h4M7 5v4" stroke="#fff"/><circle cx="11.5" cy="11.5" r="2.5" fill="#f0c020" stroke="#907010" stroke-width="0.6"/></svg>
<svg style="position:absolute;left:108px;top:390px" width="16" height="16" viewBox="0 0 16 16"><circle cx="7" cy="7" r="4" fill="#3a80d0" stroke="#1a4a90"/><circle cx="6" cy="6" r="1.5" fill="#a0d0ff"/><path d="M5 7h4" stroke="#fff"/><circle cx="11.5" cy="11.5" r="2.5" fill="#f0c020" stroke="#907010" stroke-width="0.6"/></svg>
<svg style="position:absolute;left:108px;top:414px" width="16" height="16" viewBox="0 0 16 16"><path d="M2.5 6.5h6v-3l5 4.5l-5 4.5v-3h-6Z" fill="#c8c4bc" stroke="#a8a4a0"/></svg>
<svg style="position:absolute;left:108px;top:433px" width="16" height="16" viewBox="0 0 16 16"><path d="M13.5 6.5h-6v-3l-5 4.5l5 4.5v-3h6Z" fill="#c8c4bc" stroke="#a8a4a0"/></svg>
<svg style="position:absolute;left:108px;top:452px" width="16" height="16" viewBox="0 0 16 16"><path d="M2.5 6.5h5v-3l5 4.5l-5 4.5v-3h-5Z" fill="#c8c4bc" stroke="#a8a4a0"/><path d="M13.5 3v10" stroke="#a8a4a0" stroke-width="1.2"/></svg>
<svg style="position:absolute;left:108px;top:471px" width="16" height="16" viewBox="0 0 16 16"><path d="M13.5 6.5h-5v-3l-5 4.5l5 4.5v-3h5Z" fill="#c8c4bc" stroke="#a8a4a0"/><path d="M2.5 3v10" stroke="#a8a4a0" stroke-width="1.2"/></svg>
<svg style="position:absolute;left:108px;top:490px" width="16" height="16" viewBox="0 0 16 16"><path d="M4.5 3.5 L9.5 3.5 L11.5 5.5 L11.5 13.5 L4.5 13.5 Z" fill="#e8e8e8" stroke="#a8a4a0"/><path d="M6 8h4M6 10h4" stroke="#a8a4a0"/></svg>
<div style="left:109px;top:266px;width:16px;height:1px;background:#808080;"></div>
<div style="left:109px;top:267px;width:16px;height:1px;background:#fff;"></div>
<div style="left:109px;top:326px;width:16px;height:1px;background:#808080;"></div>
<div style="left:109px;top:327px;width:16px;height:1px;background:#fff;"></div>
<div style="left:109px;top:368px;width:16px;height:1px;background:#808080;"></div>
<div style="left:109px;top:369px;width:16px;height:1px;background:#fff;"></div>
<div style="left:109px;top:410px;width:16px;height:1px;background:#808080;"></div>
<div style="left:109px;top:411px;width:16px;height:1px;background:#fff;"></div>
<div style="left:128px;top:81px;width:1px;height:700px;background:#fff;"></div>
<div style="left:128px;top:81px;width:109px;height:23px;border-top:1px solid #fff;border-left:1px solid #fff;border-top-left-radius:4px;border-top-right-radius:2px;"></div>
<div style="left:235px;top:82px;width:1px;height:22px;background:#808080;"></div>
<div style="left:236px;top:82px;width:1px;height:22px;background:#404040;"></div>
<svg style="position:absolute;left:136px;top:85px" width="16" height="16" viewBox="0 0 16 16"><path d="M4.5 2.5 L11 2.5 L12.5 4 L12.5 11.5 L4.5 11.5 Z" fill="#fff" stroke="#0000e8" stroke-width="1.2"/><path d="M6.5 5h3.5M6.5 7h4M6.5 9h4" stroke="#000" stroke-width="1"/><rect x="12" y="2" width="1" height="1" fill="#40e0e0"/></svg>
<div style="left:155px;top:87px;white-space:pre;font-size:11.3px;line-height:14px;">hmgsqlite.prg</div>
<div style="left:237px;top:103px;width:548px;height:1px;background:#fff;"></div>
<svg style="position:absolute;left:767px;top:85px" width="14" height="14" viewBox="0 0 14 14"><rect x="0" y="0" width="14" height="14" rx="3" fill="#FF6A20"/><rect x="1" y="1" width="12" height="12" rx="2.5" fill="#FF8A40"/><path d="M4 4 L10 10 M10 4 L4 10" stroke="#fff" stroke-width="2.2"/></svg>
<div style="left:784px;top:103px;width:1px;height:678px;background:#808080;"></div>
<div style="left:785px;top:103px;width:1px;height:678px;background:#404040;"></div>
<div style="left:129px;top:104px;width:639px;height:1px;background:#DCD8D0;"></div>
<div style="left:129px;top:105px;width:639px;height:19px;background:#F4F4F4;"></div>
<div style="left:129px;top:124px;width:639px;height:1px;background:#A0A0A0;"></div>
<div style="left:0;top:0;width:768px;height:124px;overflow:hidden;"><div style="left:154px;top:119px;width:1px;height:3px;background:#000"></div><div style="left:134px;top:106px;width:40px;text-align:center;font-size:11px;line-height:12px;">0</div><div style="left:162px;top:120px;width:1px;height:2px;background:#000"></div><div style="left:170px;top:120px;width:1px;height:2px;background:#000"></div><div style="left:178px;top:120px;width:1px;height:2px;background:#000"></div><div style="left:186px;top:120px;width:1px;height:2px;background:#000"></div><div style="left:194px;top:119px;width:1px;height:3px;background:#000"></div><div style="left:202px;top:120px;width:1px;height:2px;background:#000"></div><div style="left:210px;top:120px;width:1px;height:2px;background:#000"></div><div style="left:218px;top:120px;width:1px;height:2px;background:#000"></div><div style="left:226px;top:120px;width:1px;height:2px;background:#000"></div><div style="left:234px;top:119px;width:1px;height:3px;background:#000"></div><div style="left:214px;top:106px;width:40px;text-align:center;font-size:11px;line-height:12px;">10</div><div style="left:242px;top:120px;width:1px;height:2px;background:#000"></div><div style="left:250px;top:120px;width:1px;height:2px;background:#000"></div><div style="left:258px;top:120px;width:1px;height:2px;background:#000"></div><div style="left:266px;top:120px;width:1px;height:2px;background:#000"></div><div style="left:274px;top:119px;width:1px;height:3px;background:#000"></div><div style="left:282px;top:120px;width:1px;height:2px;background:#000"></div><div style="left:290px;top:120px;width:1px;height:2px;background:#000"></div><div style="left:298px;top:120px;width:1px;height:2px;background:#000"></div><div style="left:306px;top:120px;width:1px;height:2px;background:#000"></div><div style="left:314px;top:119px;width:1px;height:3px;background:#000"></div><div style="left:294px;top:106px;width:40px;text-align:center;font-size:11px;line-height:12px;">20</div><div style="left:322px;top:120px;width:1px;height:2px;background:#000"></div><div style="left:330px;top:120px;width:1px;height:2px;background:#000"></div><div style="left:338px;top:120px;width:1px;height:2px;background:#000"></div><div style="left:346px;top:120px;width:1px;height:2px;background:#000"></div><div style="left:354px;top:119px;width:1px;height:3px;background:#000"></div><div style="left:362px;top:120px;width:1px;height:2px;background:#000"></div><div style="left:370px;top:120px;width:1px;height:2px;background:#000"></div><div style="left:378px;top:120px;width:1px;height:2px;background:#000"></div><div style="left:386px;top:120px;width:1px;height:2px;background:#000"></div><div style="left:394px;top:119px;width:1px;height:3px;background:#000"></div><div style="left:374px;top:106px;width:40px;text-align:center;font-size:11px;line-height:12px;">30</div><div style="left:402px;top:120px;width:1px;height:2px;background:#000"></div><div style="left:410px;top:120px;width:1px;height:2px;background:#000"></div><div style="left:418px;top:120px;width:1px;height:2px;background:#000"></div><div style="left:426px;top:120px;width:1px;height:2px;background:#000"></div><div style="left:434px;top:119px;width:1px;height:3px;background:#000"></div><div style="left:442px;top:120px;width:1px;height:2px;background:#000"></div><div style="left:450px;top:120px;width:1px;height:2px;background:#000"></div><div style="left:458px;top:120px;width:1px;height:2px;background:#000"></div><div style="left:466px;top:120px;width:1px;height:2px;background:#000"></div><div style="left:474px;top:119px;width:1px;height:3px;background:#000"></div><div style="left:454px;top:106px;width:40px;text-align:center;font-size:11px;line-height:12px;">40</div><div style="left:482px;top:120px;width:1px;height:2px;background:#000"></div><div style="left:490px;top:120px;width:1px;height:2px;background:#000"></div><div style="left:498px;top:120px;width:1px;height:2px;background:#000"></div><div style="left:506px;top:120px;width:1px;height:2px;background:#000"></div><div style="left:514px;top:119px;width:1px;height:3px;background:#000"></div><div style="left:522px;top:120px;width:1px;height:2px;background:#000"></div><div style="left:530px;top:120px;width:1px;height:2px;background:#000"></div><div style="left:538px;top:120px;width:1px;height:2px;background:#000"></div><div style="left:546px;top:120px;width:1px;height:2px;background:#000"></div><div style="left:554px;top:119px;width:1px;height:3px;background:#000"></div><div style="left:534px;top:106px;width:40px;text-align:center;font-size:11px;line-height:12px;">50</div><div style="left:562px;top:120px;width:1px;height:2px;background:#000"></div><div style="left:570px;top:120px;width:1px;height:2px;background:#000"></div><div style="left:578px;top:120px;width:1px;height:2px;background:#000"></div><div style="left:586px;top:120px;width:1px;height:2px;background:#000"></div><div style="left:594px;top:119px;width:1px;height:3px;background:#000"></div><div style="left:602px;top:120px;width:1px;height:2px;background:#000"></div><div style="left:610px;top:120px;width:1px;height:2px;background:#000"></div><div style="left:618px;top:120px;width:1px;height:2px;background:#000"></div><div style="left:626px;top:120px;width:1px;height:2px;background:#000"></div><div style="left:634px;top:119px;width:1px;height:3px;background:#000"></div><div style="left:614px;top:106px;width:40px;text-align:center;font-size:11px;line-height:12px;">60</div><div style="left:642px;top:120px;width:1px;height:2px;background:#000"></div><div style="left:650px;top:120px;width:1px;height:2px;background:#000"></div><div style="left:658px;top:120px;width:1px;height:2px;background:#000"></div><div style="left:666px;top:120px;width:1px;height:2px;background:#000"></div><div style="left:674px;top:119px;width:1px;height:3px;background:#000"></div><div style="left:682px;top:120px;width:1px;height:2px;background:#000"></div><div style="left:690px;top:120px;width:1px;height:2px;background:#000"></div><div style="left:698px;top:120px;width:1px;height:2px;background:#000"></div><div style="left:706px;top:120px;width:1px;height:2px;background:#000"></div><div style="left:714px;top:119px;width:1px;height:3px;background:#000"></div><div style="left:694px;top:106px;width:40px;text-align:center;font-size:11px;line-height:12px;">70</div><div style="left:722px;top:120px;width:1px;height:2px;background:#000"></div><div style="left:730px;top:120px;width:1px;height:2px;background:#000"></div><div style="left:738px;top:120px;width:1px;height:2px;background:#000"></div><div style="left:746px;top:120px;width:1px;height:2px;background:#000"></div><div style="left:754px;top:119px;width:1px;height:3px;background:#000"></div><div style="left:762px;top:120px;width:1px;height:2px;background:#000"></div><div style="left:770px;top:120px;width:1px;height:2px;background:#000"></div></div>
<div style="left:346px;top:107px;width:8px;height:11px;background:#666;"></div>
<div class="chk" style="left:768px;top:120px;width:16px;height:502px;"></div>
<div style="left:768px;top:105px;width:16px;height:16px;background:#D4D0C8;border-left:1px solid #fff;border-top:1px solid #fff;border-right:1px solid #404040;border-bottom:1px solid #404040;"></div>
<svg style="position:absolute;left:768px;top:105px" width="16" height="16"><path d="M4 10 L12 10 L8 6 Z" fill="#000"/></svg>
<div style="left:768px;top:622px;width:16px;height:159px;background:#D4D0C8;border-left:1px solid #D4D0C8;border-top:1px solid #D4D0C8;box-shadow:inset 1px 1px 0 #fff, inset -1px 0 0 #808080;border-right:1px solid #404040;"></div>
<div style="left:129px;top:125px;width:639px;height:656px;overflow:hidden;background:#fff;">
<div style="left:0;top:0;width:21px;height:657px;background:#E4E4E4;"></div>
<div style="left:21px;top:80px;width:618px;height:16px;background:#E8E8E8;"></div>
<div class="ln" style="left:1px;top:-1px;color:#000">112</div>
<div class="code" style="left:21px;top:1px;">      <span class="f">aadd</span>(tablearr,<span class="f">aclone</span>(rowarr))</div>
<div class="ln" style="left:1px;top:15px;color:#000">113</div>
<div class="code" style="left:21px;top:17px;">   <span class="k">next</span> i</div>
<div class="ln" style="left:1px;top:31px;color:#000">114</div>
<div class="code" style="left:21px;top:33px;"><span class="k">endif</span></div>
<div class="ln" style="left:1px;top:47px;color:#000">115</div>
<div class="code" style="left:21px;top:49px;"><span class="k">return</span> tablearr</div>
<div class="ln" style="left:1px;top:63px;color:#000">116</div>
<div class="code" style="left:21px;top:65px;"></div>
<div class="ln" style="left:1px;top:79px;color:#000">117</div>
<div class="code" style="left:21px;top:81px;"><span class="c">// teste de comentários</span></div>
<div class="ln" style="left:1px;top:95px;color:#000">118</div>
<div class="code" style="left:21px;top:97px;"></div>
<div class="ln" style="left:1px;top:111px;color:#000">119</div>
<div class="code" style="left:21px;top:113px;"><span class="k">function</span> <span class="f">miscsql</span>(dbo1,qstr)</div>
<div class="ln" style="left:1px;top:127px;color:#FF0000">120</div>
<div class="code" style="left:21px;top:129px;"><span class="k">if</span> <span class="f">empty</span>(dbo1)</div>
<div class="ln" style="left:1px;top:143px;color:#000">121</div>
<div class="code" style="left:21px;top:145px;">   <span class="f">msgstop</span>(<span class="s">&quot;Database Connection Error!&quot;</span>)</div>
<div class="ln" style="left:1px;top:159px;color:#000">122</div>
<div class="code" style="left:21px;top:161px;">   <span class="k">return</span> .f.</div>
<div class="ln" style="left:1px;top:175px;color:#000">123</div>
<div class="code" style="left:21px;top:177px;"><span class="k">endif</span></div>
<div class="ln" style="left:1px;top:191px;color:#000">124</div>
<div class="code" style="left:21px;top:193px;"><span class="f">sqlite3_exec</span>(dbo1,qstr)</div>
<div class="ln" style="left:1px;top:207px;color:#000">125</div>
<div class="code" style="left:21px;top:209px;"><span class="k">if</span> <span class="f">sqlite3_errcode</span>(dbo1) &gt; 0 <span class="c">// error</span></div>
<div class="ln" style="left:1px;top:223px;color:#000">126</div>
<div class="code" style="left:21px;top:225px;">   <span class="f">msgstop</span>(<span class="f">sqlite3_errmsg</span>(dbo1)+<span class="s">&quot; Query is : &quot;</span>+qstr)</div>
<div class="ln" style="left:1px;top:239px;color:#000">127</div>
<div class="code" style="left:21px;top:241px;">   <span class="k">return</span> .f.</div>
<div class="ln" style="left:1px;top:255px;color:#000">128</div>
<div class="code" style="left:21px;top:257px;"><span class="k">endif</span></div>
<div class="ln" style="left:1px;top:271px;color:#000">129</div>
<div class="code" style="left:21px;top:273px;"><span class="k">return</span> .t.</div>
<div class="ln" style="left:1px;top:287px;color:#FF0000">130</div>
<div class="code" style="left:21px;top:289px;"></div>
<div class="ln" style="left:1px;top:303px;color:#000">131</div>
<div class="code" style="left:21px;top:305px;"><span class="k">function</span> <span class="f">C2SQL</span>(Value)</div>
<div class="ln" style="left:1px;top:319px;color:#000">132</div>
<div class="code" style="left:21px;top:321px;"><span class="k">local</span> cValue := <span class="s">&quot;&quot;</span></div>
<div class="ln" style="left:1px;top:335px;color:#000">133</div>
<div class="code" style="left:21px;top:337px;"><span class="k">local</span> cdate := <span class="s">&quot;&quot;</span></div>
<div class="ln" style="left:1px;top:351px;color:#000">134</div>
<div class="code" style="left:21px;top:353px;"><span class="k">if</span> ( <span class="f">valtype</span>(value) == <span class="s">&quot;C&quot;</span> .<span class="k">or</span>. <span class="f">valtype</span>( value ) == <span class="s">&quot;M&quot;</span> ) .<span class="k">and</span>. <span class="f">HMG_LEN</span>(<span class="f">alltr</span></div>
<div class="ln" style="left:1px;top:367px;color:#000">135</div>
<div class="code" style="left:21px;top:369px;">   value := <span class="f">HB_UTF8STRTRAN</span>(value, <span class="s">&quot;&#x27;&quot;</span>, <span class="s">&quot;&#x27;&#x27;&quot;</span> )</div>
<div class="ln" style="left:1px;top:383px;color:#000">136</div>
<div class="code" style="left:21px;top:385px;"><span class="k">endif</span></div>
<div class="ln" style="left:1px;top:399px;color:#000">137</div>
<div class="code" style="left:21px;top:401px;"><span class="k">do</span> <span class="k">case</span></div>
<div class="ln" style="left:1px;top:415px;color:#000">138</div>
<div class="code" style="left:21px;top:417px;">   <span class="k">case</span> <span class="f">Valtype</span>(Value) == <span class="s">&quot;N&quot;</span></div>
<div class="ln" style="left:1px;top:431px;color:#000">139</div>
<div class="code" style="left:21px;top:433px;">      cValue := <span class="f">AllTrim</span>(<span class="f">Str</span>(Value))</div>
<div class="ln" style="left:1px;top:447px;color:#FF0000">140</div>
<div class="code" style="left:21px;top:449px;">   <span class="k">case</span> <span class="f">Valtype</span>(Value) == <span class="s">&quot;D&quot;</span></div>
<div class="ln" style="left:1px;top:463px;color:#000">141</div>
<div class="code" style="left:21px;top:465px;">      <span class="k">if</span> !<span class="f">Empty</span>(Value)</div>
<div class="ln" style="left:1px;top:479px;color:#000">142</div>
<div class="code" style="left:21px;top:481px;">         cdate := <span class="f">dtos</span>(value)</div>
<div class="ln" style="left:1px;top:495px;color:#000">143</div>
<div class="code" style="left:21px;top:497px;">         cValue := <span class="s">&quot;&#x27;&quot;</span>+<span class="f">HB_USUBSTR</span>(cDate,1,4)+<span class="s">&quot;-&quot;</span>+<span class="f">HB_USUBSTR</span>(cDate,5,2)+<span class="s">&quot;-&quot;</span>+<span class="f">HB_</span></div>
<div class="ln" style="left:1px;top:511px;color:#000">144</div>
<div class="code" style="left:21px;top:513px;">      <span class="k">else</span></div>
<div class="ln" style="left:1px;top:527px;color:#000">145</div>
<div class="code" style="left:21px;top:529px;">         cValue := <span class="s">&quot;&#x27;&#x27;&quot;</span></div>
<div class="ln" style="left:1px;top:543px;color:#000">146</div>
<div class="code" style="left:21px;top:545px;">      <span class="k">endif</span></div>
<div class="ln" style="left:1px;top:559px;color:#000">147</div>
<div class="code" style="left:21px;top:561px;">   <span class="k">case</span> <span class="f">Valtype</span>(Value) $ <span class="s">&quot;CM&quot;</span></div>
<div class="ln" style="left:1px;top:575px;color:#000">148</div>
<div class="code" style="left:21px;top:577px;">      <span class="k">IF</span> <span class="f">Empty</span>( Value)</div>
<div class="ln" style="left:1px;top:591px;color:#000">149</div>
<div class="code" style="left:21px;top:593px;">         cValue=<span class="s">&quot;&#x27;&#x27;&quot;</span></div>
<div class="ln" style="left:1px;top:607px;color:#FF0000">150</div>
<div class="code" style="left:21px;top:609px;">      <span class="k">ELSE</span></div>
<div class="ln" style="left:1px;top:623px;color:#000">151</div>
<div class="code" style="left:21px;top:625px;">         cValue := <span class="s">&quot;&#x27;&quot;</span> + value + <span class="s">&quot;&#x27;&quot;</span></div>
<div class="ln" style="left:1px;top:639px;color:#000">152</div>
<div class="code" style="left:21px;top:641px;">      <span class="k">ENDIF</span></div>
</div>
<div style="left:786px;top:59px;width:70px;height:722px;background:#D4D0C8;"></div>
<div style="left:790px;top:80px;width:1px;height:701px;background:#808080;"></div>
<div style="left:791px;top:80px;width:65px;height:701px;background:#fff;border-top:1px solid #404040;border-left:1px solid #404040;"></div>
<div style="left:790px;top:59px;width:66px;height:21px;border-top-left-radius:4px;background:linear-gradient(#D8D4CC 0%,#D4D0C8 80%,#B8B4AC 92%,#9A968E 100%);border-top:1px solid #E8E6E0;"></div>
<div style="left:803px;top:62px;white-space:pre;font-size:11px;line-height:14px;">Fu...</div>
<svg style="position:absolute;left:828px;top:63px" width="28" height="14" viewBox="0 0 28 14"><rect x="4.5" y="0.5" width="5" height="5" fill="#D4D0C8" stroke="#000"/><rect x="4" y="0" width="6" height="2" fill="#000"/><rect x="2.5" y="3.5" width="5" height="5" fill="#D8D4CC" stroke="#000"/><rect x="2" y="3" width="6" height="2" fill="#000"/><path d="M17.5 1.5 L24.5 8.5 M24.5 1.5 L17.5 8.5" stroke="#000" stroke-width="1.7"/></svg>
<div style="left:792px;top:117px;width:64px;height:18px;background:#D4D0C8;"></div>
<svg style="position:absolute;left:796px;top:82px" width="16" height="16" viewBox="0 0 16 16"><path d="M8.2 3.2 Q9.5 1.6 12.8 1.8 L13 4.6 L11 4.6 Q10.6 3.6 9.8 4.2 L6.6 15.4 L1.2 15.6 L1.6 14.4 L3.2 14.2 L6.4 4.6 Z" fill="#ff0000"/><path d="M3.6 6.6 L10 6.6 L9.6 8.2 L3.2 8.2 Z" fill="#ff0000"/><path d="M8.6 10.6 h3.4 q1.2 0 1.2 1.2 v3.6 M9.9 10.6 v4.8 M8.3 15.4 h3 M12 15.4 h2.4" stroke="#000" stroke-width="1.25" fill="none"/></svg>
<div style="left:816px;top:84px;white-space:pre;font-size:11.3px;line-height:14px;color:#000;">conn...</div>
<svg style="position:absolute;left:796px;top:100px" width="16" height="16" viewBox="0 0 16 16"><path d="M8.2 3.2 Q9.5 1.6 12.8 1.8 L13 4.6 L11 4.6 Q10.6 3.6 9.8 4.2 L6.6 15.4 L1.2 15.6 L1.6 14.4 L3.2 14.2 L6.4 4.6 Z" fill="#ff0000"/><path d="M3.6 6.6 L10 6.6 L9.6 8.2 L3.2 8.2 Z" fill="#ff0000"/><path d="M8.6 10.6 h3.4 q1.2 0 1.2 1.2 v3.6 M9.9 10.6 v4.8 M8.3 15.4 h3 M12 15.4 h2.4" stroke="#000" stroke-width="1.25" fill="none"/></svg>
<div style="left:816px;top:102px;white-space:pre;font-size:11.3px;line-height:14px;color:#f00;">sql( d...</div>
<svg style="position:absolute;left:796px;top:118px" width="16" height="16" viewBox="0 0 16 16"><path d="M8.2 3.2 Q9.5 1.6 12.8 1.8 L13 4.6 L11 4.6 Q10.6 3.6 9.8 4.2 L6.6 15.4 L1.2 15.6 L1.6 14.4 L3.2 14.2 L6.4 4.6 Z" fill="#b01010"/><path d="M3.6 6.6 L10 6.6 L9.6 8.2 L3.2 8.2 Z" fill="#b01010"/><path d="M8.6 10.6 h3.4 q1.2 0 1.2 1.2 v3.6 M9.9 10.6 v4.8 M8.3 15.4 h3 M12 15.4 h2.4" stroke="#101030" stroke-width="1.25" fill="none"/></svg>
<div style="left:816px;top:120px;white-space:pre;font-size:11.3px;line-height:14px;color:#000;">miscs...</div>
<svg style="position:absolute;left:796px;top:136px" width="16" height="16" viewBox="0 0 16 16"><path d="M8.2 3.2 Q9.5 1.6 12.8 1.8 L13 4.6 L11 4.6 Q10.6 3.6 9.8 4.2 L6.6 15.4 L1.2 15.6 L1.6 14.4 L3.2 14.2 L6.4 4.6 Z" fill="#ff0000"/><path d="M3.6 6.6 L10 6.6 L9.6 8.2 L3.2 8.2 Z" fill="#ff0000"/><path d="M8.6 10.6 h3.4 q1.2 0 1.2 1.2 v3.6 M9.9 10.6 v4.8 M8.3 15.4 h3 M12 15.4 h2.4" stroke="#000" stroke-width="1.25" fill="none"/></svg>
<div style="left:816px;top:138px;white-space:pre;font-size:11.3px;line-height:14px;color:#000;">C2S...</div>
</body></html>
